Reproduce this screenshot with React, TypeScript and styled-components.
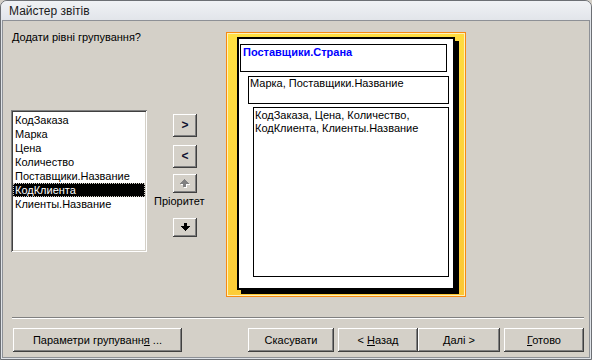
import React from "react";
import styled, { createGlobalStyle } from "styled-components";

const Global = createGlobalStyle`
  html, body { margin: 0; padding: 0; background: #d4d0c8; }
  body { font-family: "Liberation Sans", Arial, sans-serif; font-size: 11px; color: #000; }
  #root { width: 592px; height: 360px; }
  * { box-sizing: border-box; }
`;

const Window = styled.div`
  width: 592px;
  height: 360px;
  border: 1px solid #6c6f74;
  border-radius: 7px 7px 0 0;
  background: #dfe3e8;
  display: flex;
  flex-direction: column;
  overflow: hidden;
`;

const TitleBar = styled.div`
  height: 19px;
  flex: none;
  background: linear-gradient(#f0f2f5, #e2e5ea);
  padding: 3px 0 0 8px;
  font-size: 12px;
  line-height: 14px;
  color: #1b1b1b;
`;

const Body = styled.div`
  flex: 1;
  margin: 0 1px 1px 1px;
  border: 1px solid #8d9096;
  background: #d4d0c8;
  padding: 9px 5px 0 8px;
  display: flex;
  flex-direction: column;
`;

const MainRow = styled.div`
  display: flex;
  align-items: flex-start;
`;

const LeftCol = styled.div`
  width: 136px;
  display: flex;
  flex-direction: column;
`;

const Heading = styled.div`
  margin-left: 1px;
  line-height: 14px;
  white-space: nowrap;
`;

const ListBox = styled.div`
  margin-top: 66px;
  height: 142px;
  background: #fff;
  box-shadow: inset 1px 1px #808080, inset -1px -1px #fff, inset 2px 2px #404040,
    inset -2px -2px #d4d0c8;
  padding: 3px 2px 2px 2px;
  display: flex;
  flex-direction: column;
`;

const ListItem = styled.div<{ $selected?: boolean }>`
  height: 14px;
  line-height: 14px;
  padding-left: 2px;
  white-space: nowrap;
  background: ${(p) => (p.$selected ? "#000" : "transparent")};
  color: ${(p) => (p.$selected ? "#fff" : "#000")};
  outline: ${(p) => (p.$selected ? "1px dotted #d4d0c8" : "none")};
  outline-offset: -1px;
`;

const PriorityCol = styled.div`
  margin-left: 7px;
  margin-top: 84px;
  width: 52px;
  display: flex;
  flex-direction: column;
  align-items: flex-start;
`;

const ClassicButton = styled.div<{ $w: number; $h: number; $mt?: number }>`
  width: ${(p) => p.$w}px;
  height: ${(p) => p.$h}px;
  margin-top: ${(p) => p.$mt ?? 0}px;
  background: #d4d0c8;
  box-shadow: inset -1px -1px #404040, inset 1px 1px #fff, inset -2px -2px #808080,
    inset 2px 2px #d4d0c8;
  display: flex;
  align-items: center;
  justify-content: center;
  font-size: 11px;
  color: #000;
  white-space: nowrap;
  flex: none;
`;

const SmallButton = styled(ClassicButton)`
  margin-left: 19px;
  font-size: 12px;
  padding-bottom: 1px;
`;

const Glyph = styled.span`
  font-weight: bold;
  color: #101030;
`;

const PriorityLabel = styled.div`
  margin-top: 1px;
  line-height: 14px;
  white-space: nowrap;
`;

const PreviewFrame = styled.div`
  margin-left: 20px;
  margin-top: 2px;
  width: 240px;
  height: 265px;
  border: 1px solid #f78a12;
  box-shadow: inset 0 0 0 1px #fff1b8;
  background: linear-gradient(165deg, #ffe043 0%, #fdd33c 55%, #fbc735 100%);
  padding: 4px 0 0 10px;
`;

const Page = styled.div`
  width: 218px;
  height: 253px;
  border: 2px solid #000;
  background: #fff;
  box-shadow: 4px 4px 0 #000;
  display: flex;
  flex-direction: column;
  align-items: flex-start;
  padding-top: 5px;
`;

const GroupBox = styled.div<{ $left: number; $w: number; $h: number; $mt: number; $pad: string }>`
  margin-left: ${(p) => p.$left}px;
  margin-top: ${(p) => p.$mt}px;
  width: ${(p) => p.$w}px;
  height: ${(p) => p.$h}px;
  border: 1px solid #000;
  padding: ${(p) => p.$pad};
  line-height: 13px;
  white-space: nowrap;
`;

const GroupTitle = styled.div`
  color: #0000ff;
  font-weight: bold;
`;

const Separator = styled.div`
  margin: 20px 0 0 1px;
  height: 2px;
  border-top: 1px solid #808080;
  border-bottom: 1px solid #fff;
`;

const ButtonRow = styled.div`
  display: flex;
  margin: 9px 0 0 2px;
`;

const Spacer = styled.div`
  flex: 1;
`;

const WizardButton = styled(ClassicButton)<{ $ml?: number }>`
  margin-left: ${(p) => p.$ml ?? 0}px;
`;

const ArrowUp = ({ disabled }: { disabled?: boolean }) => {
  const shape = (dx: number, dy: number, fill: string) => (
    <g transform={`translate(${dx} ${dy})`} fill={fill}>
      <rect x="4" y="0" width="1" height="1" />
      <rect x="3" y="1" width="3" height="1" />
      <rect x="2" y="2" width="5" height="1" />
      <rect x="1" y="3" width="7" height="1" />
      <rect x="0" y="4" width="9" height="1" />
      <rect x="3" y="5" width="3" height="3" />
    </g>
  );
  return (
    <svg width="10" height="9" viewBox="0 0 10 9" shapeRendering="crispEdges">
      {disabled && shape(1, 1, "#fff")}
      {shape(0, 0, disabled ? "#808080" : "#000")}
    </svg>
  );
};

const ArrowDown = () => (
  <svg width="9" height="8" viewBox="0 0 9 8" shapeRendering="crispEdges" fill="#000">
    <rect x="3" y="0" width="3" height="3" />
    <rect x="0" y="3" width="9" height="1" />
    <rect x="1" y="4" width="7" height="1" />
    <rect x="2" y="5" width="5" height="1" />
    <rect x="3" y="6" width="3" height="1" />
    <rect x="4" y="7" width="1" height="1" />
  </svg>
);

const fields = [
  "КодЗаказа",
  "Марка",
  "Цена",
  "Количество",
  "Поставщики.Название",
  "КодКлиента",
  "Клиенты.Название",
];

export default function App() {
  return (
    <>
      <Global />
      <Window>
        <TitleBar>Майстер звітів</TitleBar>
        <Body>
          <MainRow>
            <LeftCol>
              <Heading>Додати рівні групування?</Heading>
              <ListBox>
                {fields.map((f) => (
                  <ListItem key={f} $selected={f === "КодКлиента"}>
                    {f}
                  </ListItem>
                ))}
              </ListBox>
            </LeftCol>
            <PriorityCol>
              <SmallButton $w={24} $h={23}>
                <Glyph>&gt;</Glyph>
              </SmallButton>
              <SmallButton $w={24} $h={23} $mt={8}>
                <Glyph>&lt;</Glyph>
              </SmallButton>
              <SmallButton $w={24} $h={19} $mt={6}>
                <ArrowUp disabled />
              </SmallButton>
              <PriorityLabel>Пріоритет</PriorityLabel>
              <SmallButton $w={24} $h={19} $mt={10}>
                <ArrowDown />
              </SmallButton>
            </PriorityCol>
            <PreviewFrame>
              <Page>
                <GroupBox $left={1} $w={207} $h={28} $mt={0} $pad="1px 0 0 2px">
                  <GroupTitle>Поставщики.Страна</GroupTitle>
                </GroupBox>
                <GroupBox $left={9} $w={201} $h={28} $mt={4} $pad="0 0 0 1px">
                  Марка, Поставщики.Название
                </GroupBox>
                <GroupBox $left={14} $w={196} $h={170} $mt={3} $pad="1px 0 0 1px">
                  КодЗаказа, Цена, Количество,
                  <br />
                  КодКлиента, Клиенты.Название
                </GroupBox>
              </Page>
            </PreviewFrame>
          </MainRow>
          <Separator />
          <ButtonRow>
            <WizardButton $w={169} $h={24}>
              <span>
                Параметри групуванн<u>я</u> ...
              </span>
            </WizardButton>
            <Spacer />
            <WizardButton $w={86} $h={24}>Скасувати</WizardButton>
            <WizardButton $w={80} $h={24} $ml={4}>
              <span>
                &lt; <u>Н</u>азад
              </span>
            </WizardButton>
            <WizardButton $w={82} $h={24}>
              <span>
                <u>Д</u>алі &gt;
              </span>
            </WizardButton>
            <WizardButton $w={80} $h={24} $ml={4}>
              <span>
                <u>Г</u>отово
              </span>
            </WizardButton>
          </ButtonRow>
        </Body>
      </Window>
    </>
  );
}
